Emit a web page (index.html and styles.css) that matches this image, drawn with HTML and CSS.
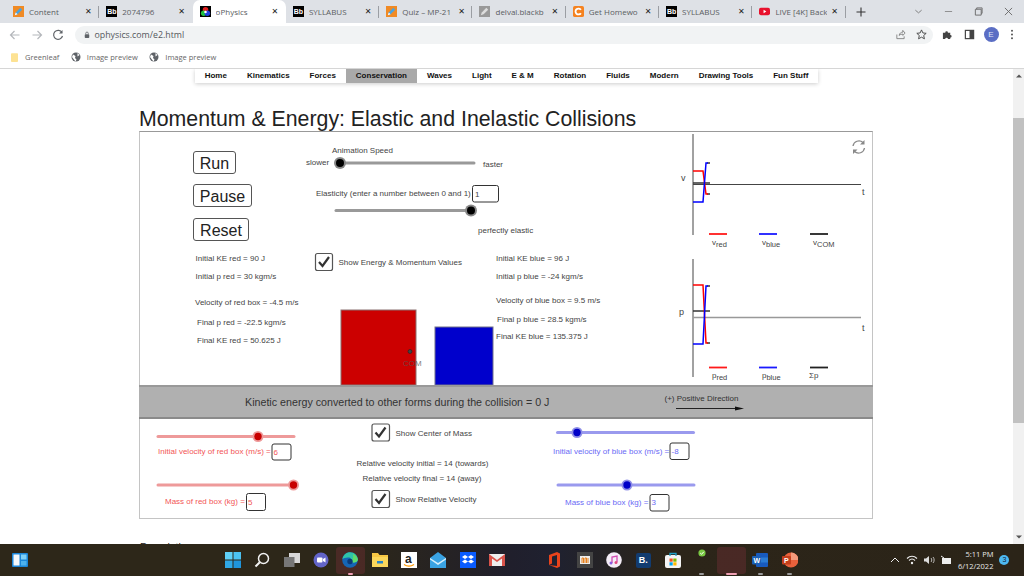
FILE: index.html
```html
<!DOCTYPE html>
<html lang="en">
<head>
<meta charset="utf-8">
<title>oPhysics</title>
<link rel="stylesheet" href="styles.css">
</head>
<body>
<div class="browser">
  <div class="tabstrip">
    <div class="tab sep"><svg class="fav" viewBox="0 0 12 12"><rect width="12" height="12" fill="#f08a24"/><path d="M2 10l1-3 5-5 2 2-5 5z" fill="#4aa3df"/><path d="M2 10l1-3 2 2z" fill="#fff"/></svg><span class="tab-title">Content</span><span class="close">✕</span></div>
    <div class="tab"><span class="bb">Bb</span><span class="tab-title">2074796</span><span class="close">✕</span></div>
    <div class="tab active"><svg class="fav" viewBox="0 0 12 12"><rect width="12" height="12" fill="#000"/><circle cx="6" cy="4" r="3" fill="#e02020"/><circle cx="4" cy="8" r="3" fill="#20c040"/><circle cx="8" cy="8" r="3" fill="#2040e0"/><circle cx="6" cy="6.5" r="1.4" fill="#fff"/></svg><span class="tab-title">oPhysics</span><span class="close">✕</span></div>
    <div class="tab sep"><span class="bb">Bb</span><span class="tab-title">SYLLABUS</span><span class="close">✕</span></div>
    <div class="tab sep"><svg class="fav" viewBox="0 0 12 12"><rect width="12" height="12" fill="#f08a24"/><path d="M2 10l1-3 5-5 2 2-5 5z" fill="#4aa3df"/><path d="M2 10l1-3 2 2z" fill="#fff"/></svg><span class="tab-title">Quiz – MP-21</span><span class="close">✕</span></div>
    <div class="tab sep"><svg class="fav" viewBox="0 0 12 12"><rect width="12" height="12" fill="#999"/><path d="M2 10l1-3 5-5 2 2-5 5z" fill="#ddd"/></svg><span class="tab-title">delval.blackb</span><span class="close">✕</span></div>
    <div class="tab sep"><svg class="fav" viewBox="0 0 12 12"><rect width="12" height="12" rx="2" fill="#f5821f"/><path d="M8.6 4.2A3.2 3.2 0 1 0 8.6 7.8" fill="none" stroke="#fff" stroke-width="2"/></svg><span class="tab-title">Get Homewo</span><span class="close">✕</span></div>
    <div class="tab sep"><span class="bb">Bb</span><span class="tab-title">SYLLABUS</span><span class="close">✕</span></div>
    <div class="tab sep"><svg class="fav" viewBox="0 0 12 12"><rect y="2" width="12" height="8" rx="2" fill="#e8112d"/><path d="M5 4l3 2-3 2z" fill="#fff"/></svg><span class="tab-title">LIVE [4K] Back</span><span class="close">✕</span></div>
    <svg class="newtab" viewBox="0 0 10 10"><path d="M5 .5v9M.5 5h9" stroke="#333" stroke-width="1.1"/></svg>
    <div class="winctl">
      <svg viewBox="0 0 10 10"><path d="M1.5 3.5L5 6.5l3.5-3" fill="none" stroke="#777"/></svg>
      <svg viewBox="0 0 10 10"><path d="M1 5h8" stroke="#888"/></svg>
      <svg viewBox="0 0 10 10"><path d="M1.5 2.5h6.500v6.500h-6.500zM3 2.500v-1.500h6v6h-1" fill="none" stroke="#666"/></svg>
      <svg viewBox="0 0 10 10"><path d="M1 1l8 8M9 1l-8 8" stroke="#666"/></svg>
    </div>
  </div>

  <div class="toolbar">
    <svg class="tool-ic" viewBox="0 0 12 12"><path d="M10.500 6h-9M5.500 2l-4 4 4 4" fill="none" stroke="#b4b7bb" stroke-width="1.200"/></svg>
    <svg class="tool-ic" viewBox="0 0 12 12"><path d="M1.500 6h9M6.500 2l4 4-4 4" fill="none" stroke="#b4b7bb" stroke-width="1.200"/></svg>
    <svg class="tool-ic" viewBox="0 0 12 12"><path d="M10 3.500A4.500 4.500 0 1 0 10.500 7" fill="none" stroke="#5f6368" stroke-width="1.200"/><path d="M10.500 1v3.500H7z" fill="#5f6368"/></svg>
    <div class="omnibox">
      <svg class="lock" viewBox="0 0 8 10"><rect x="1" y="4" width="6" height="5" rx="1" fill="#5f6368"/><path d="M2.300 4V2.800a1.700 1.700 0 0 1 3.400 0V4" fill="none" stroke="#5f6368"/></svg>
      <span class="url">ophysics.com/e2.html</span>
      <svg class="omni-ic" viewBox="0 0 12 12"><path d="M2 6v4.500h8V8M4.500 7c.5-2.500 2-3.500 4-3.500V1.500L11 4.500 8.500 7V5.500C7 5.500 5.500 6 4.500 7z" fill="none" stroke="#777" stroke-width=".9"/></svg>
      <svg class="omni-ic" viewBox="0 0 12 12"><path d="M6 1l1.500 3.300 3.600.4-2.700 2.400.8 3.600L6 8.900l-3.200 1.800.8-3.600L.9 4.700l3.600-.4z" fill="none" stroke="#444" stroke-width="1"/></svg>
    </div>
    <svg class="ext" viewBox="0 0 12 12"><path d="M1 4h2.500a1.500 1.500 0 0 1 3 0H9v2.500a1.500 1.500 0 0 1 0 3V11H6.500a1.500 1.500 0 0 0-3 0H1z" fill="#444"/></svg>
    <svg class="ext panel" viewBox="0 0 12 12"><rect x="1.500" y="1.500" width="9" height="9" fill="none" stroke="#444" stroke-width="1.300"/><rect x="6" y="1.500" width="4.500" height="9" fill="#444"/></svg>
    <span class="avatar">E</span>
    <svg class="dots" viewBox="0 0 4 12"><circle cx="2" cy="2" r="1.100"/><circle cx="2" cy="6" r="1.100"/><circle cx="2" cy="10" r="1.100"/></svg>
  </div>

  <div class="bookmarks">
    <span class="bm"><svg class="folder" viewBox="0 0 8 10"><rect width="8" height="10" rx="1" fill="#fde293"/></svg>Greenleaf</span>
    <span class="bm"><svg class="globe" viewBox="0 0 10 10"><circle cx="5" cy="5" r="4.500" fill="#5f6368"/><path d="M2 2.500l2.500 1.500-.5 2 1.500 1.500-1 2L2.500 7 1 5zM6.500 1l2 2-2 1.500z" fill="#fff"/></svg>Image preview</span>
    <span class="bm"><svg class="globe" viewBox="0 0 10 10"><circle cx="5" cy="5" r="4.500" fill="#5f6368"/><path d="M2 2.500l2.500 1.500-.5 2 1.500 1.500-1 2L2.500 7 1 5zM6.500 1l2 2-2 1.500z" fill="#fff"/></svg>Image preview</span>
  </div>

  <div class="viewport">
    <main class="page">
      <nav class="nav">
        <a>Home</a><a>Kinematics</a><a>Forces</a><a class="current">Conservation</a><a>Waves</a><a>Light</a><a>E &amp; M</a><a>Rotation</a><a>Fluids</a><a>Modern</a><a>Drawing Tools</a><a>Fun Stuff</a>
      </nav>
      <div class="container">
        <h1 class="title">Momentum &amp; Energy: Elastic and Inelastic Collisions</h1>
        <section class="sim">
          <svg class="stage" viewBox="140 132 732 253">
            <g class="btn">
              <rect x="193.500" y="151.500" width="42" height="22" rx="2.500"/><text x="214.500" y="169">Run</text>
              <rect x="193.500" y="184.500" width="58" height="22" rx="2.500"/><text x="222.500" y="202">Pause</text>
              <rect x="193.500" y="218.500" width="55" height="22" rx="2.500"/><text x="221" y="236">Reset</text>
            </g>

            <text class="lab" x="332" y="153">Animation Speed</text>
            <text class="lab" x="306" y="164.500">slower</text>
            <text class="lab" x="483" y="167">faster</text>
            <line class="track-gray" x1="340" y1="163" x2="474" y2="163"/>
            <circle class="halo-gray" cx="340" cy="163" r="6"/><circle cx="340" cy="163" r="4"/>

            <text class="lab" x="316" y="196">Elasticity (enter a number between 0 and 1)</text>
            <rect class="field" x="472.500" y="185.500" width="26" height="16.500" rx="2"/>
            <text class="lab" x="475" y="197">1</text>
            <line class="track-gray" x1="336" y1="210.500" x2="471" y2="210.500"/>
            <circle class="halo-gray" cx="471" cy="210.500" r="6"/><circle cx="471" cy="210.500" r="4"/>
            <text class="lab" x="478" y="233">perfectly elastic</text>

            <text class="lab" x="195.500" y="261">Initial KE red = 90 J</text>
            <text class="lab" x="195.500" y="279">Initial p red = 30 kgm/s</text>
            <text class="lab" x="195" y="305">Velocity of red box = -4.5 m/s</text>
            <text class="lab" x="197" y="325">Final p red = -22.5 kgm/s</text>
            <text class="lab" x="197" y="343">Final KE red = 50.625 J</text>

            <rect class="field check" x="315.500" y="253.500" width="17" height="17" rx="2"/>
            <path class="tick" d="M319 262l3.500 4 6.500-9"/>
            <text class="lab" x="338.500" y="265">Show Energy &amp; Momentum Values</text>

            <text class="lab" x="496" y="261">Initial KE blue = 96 J</text>
            <text class="lab" x="496" y="279">Initial p blue = -24 kgm/s</text>
            <text class="lab" x="496" y="302.500">Velocity of blue box = 9.5 m/s</text>
            <text class="lab" x="497" y="322">Final p blue = 28.5 kgm/s</text>
            <text class="lab" x="496" y="339">Final KE blue = 135.375 J</text>

            <rect class="box-red" x="341" y="310" width="75" height="75"/>
            <rect class="box-blue" x="435" y="327" width="58" height="58"/>
            <text class="lab com-label" x="403" y="366">COM</text>
            <circle class="com" cx="410" cy="351.500" r="2"/>

            <!-- velocity graph -->
            <line class="axis" x1="693" y1="134" x2="693" y2="235"/>
            <line class="axis" x1="693" y1="184.500" x2="861" y2="184.500"/>
            <text class="lab big" x="681" y="181">v</text>
            <text class="lab big" x="862" y="195">t</text>
            <path class="plot-k" d="M693 183H710"/>
            <path class="plot-k" d="M707 194h3M707 163h3"/>
            <path class="plot-r" d="M693 171H703L706 194H708"/>
            <path class="plot-b" d="M693 202H703L706 163H708"/>
            <path class="leg-r" d="M709 234h18"/><path class="leg-b" d="M759 234h18"/><path class="leg-k" d="M810 234h18"/>
            <text class="lab" x="712" y="245">v<tspan class="sub" dy="2">red</tspan></text>
            <text class="lab" x="762" y="245">v<tspan class="sub" dy="2">blue</tspan></text>
            <text class="lab" x="813" y="245">v<tspan class="sub" dy="2">COM</tspan></text>

            <!-- refresh icon -->
            <g class="refresh">
              <path d="M853 146a6 6 0 0 1 10-3.500M864.500 148a6 6 0 0 1-10 3.500"/>
              <path class="arrowhead" d="M864.500 140v4.500H860zM853 154v-4.500h4.500z"/>
            </g>

            <!-- momentum graph -->
            <line class="axis" x1="693" y1="259" x2="693" y2="377"/>
            <line class="axis-light" x1="693" y1="317.500" x2="861" y2="317.500"/>
            <text class="lab big" x="679" y="315">p</text>
            <text class="lab big" x="862" y="331">t</text>
            <path class="plot-k" d="M693 311H710"/>
            <path class="plot-k" d="M707 343h3M707 286h3"/>
            <path class="plot-r" d="M693 285H703L706 343H708"/>
            <path class="plot-b" d="M693 344H703L706 286H708"/>
            <path class="leg-r" d="M709 367.500h18"/><path class="leg-b" d="M759 367.500h18"/><path class="leg-k" d="M810 367.500h18"/>
            <text class="lab" x="712" y="378">p<tspan class="sub" dy="2">red</tspan></text>
            <text class="lab" x="762" y="378">p<tspan class="sub" dy="2">blue</tspan></text>
            <text class="lab" x="809" y="378">Σp</text>
          </svg>

          <div class="band">
            <span class="band-text">Kinetic energy converted to other forms during the collision = 0 J</span>
            <div class="direction">
              <span>(+) Positive Direction</span>
              <svg class="dir-arrow" viewBox="0 0 68 5"><path d="M0 2.500h62" stroke="#222"/><path d="M59 .5l9 2-9 2z" fill="#111"/></svg>
            </div>
          </div>

          <svg class="controls" viewBox="140 419 732 99">
            <line class="track-red" x1="158" y1="436.500" x2="294" y2="436.500"/>
            <circle class="halo-red" cx="258" cy="436.500" r="5.500"/><circle class="knob-red" cx="258" cy="436.500" r="3.700"/>
            <text class="lab red" x="158" y="454">Initial velocity of red box (m/s) =</text>
            <rect class="field" x="272" y="444" width="19" height="16" rx="2"/>
            <text class="lab red" x="273.500" y="455">6</text>
            <line class="track-red" x1="158" y1="485" x2="294" y2="485"/>
            <circle class="halo-red" cx="293.500" cy="485" r="5.500"/><circle class="knob-red" cx="293.500" cy="485" r="3.700"/>
            <text class="lab red" x="165" y="504">Mass of red box (kg) =</text>
            <rect class="field" x="246.500" y="493.500" width="19" height="17" rx="2"/>
            <text class="lab red" x="248" y="505">5</text>

            <rect class="field check" x="372" y="424" width="17.500" height="17" rx="2"/>
            <path class="tick" d="M375.500 432.500l3.500 4 6.500-9"/>
            <text class="lab" x="395.500" y="436">Show Center of Mass</text>
            <text class="lab" x="356.500" y="466">Relative velocity initial = 14 (towards)</text>
            <text class="lab" x="362.500" y="481">Relative velocity final = 14 (away)</text>
            <rect class="field check" x="372" y="490.500" width="17.500" height="17" rx="2"/>
            <path class="tick" d="M375.500 499l3.500 4 6.500-9"/>
            <text class="lab" x="395.500" y="502">Show Relative Velocity</text>

            <line class="track-blue" x1="557.500" y1="432.500" x2="693.500" y2="432.500"/>
            <circle class="halo-blue" cx="577" cy="432.500" r="5.500"/><circle class="knob-blue" cx="577" cy="432.500" r="3.700"/>
            <text class="lab blue" x="553" y="454">Initial velocity of blue box (m/s) =</text>
            <rect class="field" x="670" y="443" width="19" height="16.500" rx="2"/>
            <text class="lab blue" x="671.500" y="454">-8</text>
            <line class="track-blue" x1="558" y1="485" x2="694" y2="485"/>
            <circle class="halo-blue" cx="627" cy="485" r="5.500"/><circle class="knob-blue" cx="627" cy="485" r="3.700"/>
            <text class="lab blue" x="565" y="505">Mass of blue box (kg) =</text>
            <rect class="field" x="650" y="494.500" width="19" height="16.500" rx="2"/>
            <text class="lab blue" x="651.500" y="505">3</text>
          </svg>
        </section>
        <h2 class="desc">Description</h2>
      </div>
    </main>
    <div class="scrollbar">
      <svg class="sb-arrow" viewBox="0 0 6 4"><path d="M3 .5L6 3.500H0z" fill="#555"/></svg>
      <div class="sb-gap"></div>
      <div class="sb-thumb"></div>
      <div class="sb-fill"></div>
      <svg class="sb-arrow" viewBox="0 0 6 4"><path d="M3 3.500L6 .5H0z" fill="#555"/></svg>
    </div>
  </div>

  <footer class="taskbar">
    <svg class="widgets" viewBox="0 0 16 14"><rect width="16" height="14" rx="1" fill="#1b86d8"/><rect x="1.500" y="1.500" width="6" height="11" fill="#f4f8fb"/><rect x="9" y="1.500" width="5.500" height="5" fill="#7fd0f7"/><rect x="9" y="8" width="5.500" height="4.500" fill="#4db1ec"/></svg>
    <div class="apps">
      <div class="slot"><svg class="app" viewBox="0 0 16 16"><rect width="7.500" height="7.500" fill="#5fd0f7"/><rect x="8.500" width="7.500" height="7.500" fill="#4cc2f1"/><rect y="8.500" width="7.500" height="7.500" fill="#2fa8e6"/><rect x="8.500" y="8.500" width="7.500" height="7.500" fill="#1f95dc"/></svg></div>
      <div class="slot"><svg class="app" viewBox="0 0 16 16"><circle cx="9.500" cy="6.500" r="5" fill="none" stroke="#f2f2f2" stroke-width="1.500"/><path d="M5.800 10.200L1.500 14.500" stroke="#f2f2f2" stroke-width="2"/></svg></div>
      <div class="slot"><svg class="app" viewBox="0 0 16 16"><rect x="5" y="1" width="11" height="10" fill="#d8d8d8"/><rect y="5" width="10.500" height="10" fill="#777"/></svg></div>
      <div class="slot"><svg class="app" viewBox="0 0 16 16"><circle cx="8" cy="8" r="7.500" fill="#6264c8"/><rect x="4" y="5.500" width="5.500" height="5" rx="1" fill="#fff"/><path d="M10 7l2.500-1.500v5L10 9z" fill="#fff"/></svg></div>
      <div class="slot on"><svg class="app" viewBox="0 0 16 16"><circle cx="8" cy="8" r="7.800" fill="#1566b5"/><path d="M.4 7C1.500 2.500 4.500.2 8 .2c4.500 0 7.800 3.300 7.800 7.300 0 2-2 3-3.800 3-1.500 0-2.500-.5-2.800-1 1-2.500-1-4.500-3.500-4C3.500 6 1.500 6 .4 7z" fill="#2fc4a8"/><path d="M11 2c2.500 1 4.500 3 4.800 5.500 0 2-2 3-3.800 3-1 0-2-.3-2.500-.8C11 7 11.500 4.500 11 2z" fill="#5fdc6e"/><circle cx="8" cy="9.500" r="2.700" fill="#0b3a78"/></svg><i class="mark pink-short"></i></div>
      <div class="slot"><svg class="app" viewBox="0 0 16 16"><path d="M0 1h6l1.500 2H16v12H0z" fill="#f7c744"/><rect y="5" width="16" height="10" fill="#fbd75b"/><rect x="5" y="9" width="6" height="2.500" fill="#2a86c8"/></svg></div>
      <div class="slot"><svg class="app" viewBox="0 0 16 16"><rect width="16" height="16" fill="#fff"/><text class="a-letter" x="4" y="10.500">a</text><path d="M3 12.500c3 2 7 2 10 0" fill="none" stroke="#f90" stroke-width="1.200"/></svg></div>
      <div class="slot"><svg class="app" viewBox="0 0 16 16"><path d="M0 6l8-6 8 6v10H0z" fill="#3aa3e3"/><path d="M0 6l8 5 8-5v1.500L8 13 0 7.500z" fill="#d6effb"/></svg></div>
      <div class="slot"><svg class="app" viewBox="0 0 16 16"><rect width="16" height="16" fill="#0a5cff"/><path d="M5 3l3 2-3 2-3-2zM11 3l3 2-3 2-3-2zM5 7.500l3 2-3 2-3-2zM11 7.500l3 2-3 2-3-2z" fill="#fff"/></svg></div>
      <div class="slot"><svg class="app" viewBox="0 0 16 16"><rect y="2" width="16" height="12" fill="#eee"/><path d="M0 2l8 6 8-6v12h-3V6.500L8 10 3 6.500V14H0z" fill="#d9534a"/></svg></div>
      <div class="slot"></div>
      <div class="slot"><svg class="app" viewBox="0 0 16 16"><path d="M2 3l8-3 3 1.500v13L10 16l-8-3 8 1V3L5 4.500v7L2 13z" fill="#e8431c"/></svg></div>
      <div class="slot"><svg class="app" viewBox="0 0 16 16"><rect width="16" height="16" fill="#444"/><rect x="3" y="4" width="10" height="8" fill="#eee"/><path d="M5 11V6h1.500v5M8 11V6h1.500v5M11 11V6" stroke="#e8801c" fill="none"/></svg></div>
      <div class="slot"><svg class="app" viewBox="0 0 16 16"><circle cx="8" cy="8" r="7.800" fill="#f4edf7"/><path d="M6 11V5l5-1v6" fill="none" stroke="#d04bb0" stroke-width="1.300"/><circle cx="5" cy="11" r="1.500" fill="#8a5be0"/><circle cx="10" cy="10.500" r="1.500" fill="#e04a80"/></svg></div>
      <div class="slot"><span class="app-b">B.</span></div>
      <div class="slot"><svg class="app" viewBox="0 0 16 16"><rect y="3" width="16" height="13" rx="2" fill="#f4f4f4"/><path d="M5 4V1.500h6V4" fill="none" stroke="#1fa0c8" stroke-width="1.300"/><rect x="4.500" y="6.500" width="3.200" height="3.200" fill="#f25022"/><rect x="8.300" y="6.500" width="3.200" height="3.200" fill="#7fba00"/><rect x="4.500" y="10.300" width="3.200" height="3.200" fill="#00a4ef"/><rect x="8.300" y="10.300" width="3.200" height="3.200" fill="#ffb900"/></svg></div>
      <div class="slot"><svg class="dot-app" viewBox="0 0 8 8"><circle cx="4" cy="4" r="3.600" fill="#7ac943"/><path d="M2.200 4l1.300 1.300 2.300-2.500" fill="none" stroke="#fff"/></svg><i class="mark gray"></i></div>
      <div class="slot on"><i class="mark pink"></i></div>
      <div class="slot"><svg class="app" viewBox="0 0 16 16"><rect x="4" y="1" width="12" height="14" rx="1" fill="#185abd"/><rect x="4" y="5.500" width="12" height="5" fill="#2b7cd3"/><rect y="4" width="9" height="8.500" rx="1" fill="#1a5fb4"/><text class="w-letter" x="1.500" y="10.800">W</text></svg><i class="mark gray"></i></div>
      <div class="slot"><svg class="app" viewBox="0 0 16 16"><circle cx="9" cy="8" r="7.500" fill="#e8613c"/><path d="M9 .5a7.500 7.500 0 0 1 7.500 7.500H9z" fill="#f59b7c"/><rect y="4" width="9" height="8.500" rx="1" fill="#c43e1c"/><text class="w-letter" x="2" y="10.800">P</text></svg><i class="mark gray"></i></div>
    </div>
    <div class="tray">
      <svg class="tray-ic" viewBox="0 0 12 10"><path d="M2 7l4-4 4 4" fill="none" stroke="#eee" stroke-width="1"/></svg>
      <svg class="tray-ic" viewBox="0 0 12 10"><path d="M1 3.500c3-3 7-3 10 0M3 5.500c2-2 4-2 6 0" fill="none" stroke="#eee" stroke-width="1.100"/><circle cx="6" cy="8" r="1.200" fill="#eee"/></svg>
      <svg class="tray-ic" viewBox="0 0 12 10"><path d="M1 3.500h2l3-2.500v8L3 6.500H1z" fill="#ddd"/><path d="M8 3c1 1 1 3 0 4M10 2c1.500 1.500 1.500 4.500 0 6" fill="none" stroke="#ddd" stroke-width=".8"/></svg>
      <svg class="tray-ic" viewBox="0 0 12 10"><rect x="2" y="3" width="9" height="6" fill="#eee"/><path d="M1 1l3 2" stroke="#eee"/></svg>
    </div>
    <div class="clock"><span>5:11 PM</span><span>6/12/2022</span></div>
    <span class="badge">3</span>
  </footer>
</div>
</body>
</html>
```
FILE: styles.css
```css
* { box-sizing: border-box; }
html, body { margin: 0; height: 100%; overflow: hidden; }
body { font-family: "Liberation Sans", Arial, sans-serif; background: #fff; }
.browser { display: flex; flex-direction: column; width: 1024px; height: 576px; }

/* tab strip */
.tabstrip { display: flex; align-items: center; height: 23px; padding-left: 6px; background: #dee1e6; flex: none; }
.tab { position: relative; display: flex; align-items: center; flex: none; width: 93.3px; height: 23px; padding: 0 6px 0 7px; overflow: hidden; }
.tab.sep::after { content: ""; position: absolute; right: 0; top: 6px; width: 1px; height: 12px; background: #9b9ea3; }
.tab.active { background: #fff; border-radius: 7px 7px 0 0; }
.fav { width: 11px; height: 11px; flex: none; }
.bb { width: 11px; height: 11px; flex: none; background: #000; color: #fff; font-size: 7px; font-weight: bold; line-height: 11px; text-align: center; }
.tab-title { flex: 1; min-width: 0; margin-left: 5px; overflow: hidden; white-space: nowrap; font-family: "Open Sans", sans-serif; font-size: 8px; color: #5a5d62; }
.close { flex: none; width: 10px; margin-left: 3px; font-family: "DejaVu Sans", sans-serif; font-size: 8px; color: #222; text-align: center; }
.newtab { width: 10px; height: 10px; margin-left: 10px; flex: none; }
.winctl { display: flex; align-items: center; gap: 21px; margin-left: 48px; }
.winctl svg { width: 9px; height: 9px; }

/* toolbar */
.toolbar { display: flex; align-items: center; height: 23px; padding-left: 9px; flex: none; background: #fff; }
.tool-ic { width: 12px; height: 12px; margin-right: 9.500px; flex: none; }
.omnibox { display: flex; align-items: center; width: 858px; height: 18px; margin-left: 1px; padding: 0 6px 0 9px; border-radius: 9px; background: #f1f3f4; }
.lock { width: 6px; height: 8px; flex: none; }
.url { flex: 1; margin-left: 5px; font-family: "Open Sans", sans-serif; font-size: 8.800px; color: #55585c; }
.omni-ic { width: 11px; height: 11px; margin-left: 10px; flex: none; }
.ext { width: 11px; height: 11px; margin-left: 9px; flex: none; }
.panel { margin-left: 11px; }
.avatar { width: 15px; height: 15px; margin-left: 9px; flex: none; border-radius: 50%; background: #5b6ec4; color: #dfe3f5; font-size: 8px; line-height: 15px; text-align: center; }
.dots { width: 4px; height: 11px; margin-left: 11px; fill: #555; flex: none; }

/* bookmarks */
.bookmarks { display: flex; align-items: center; gap: 11.500px; height: 23px; padding-left: 11px; flex: none; border-bottom: 1px solid #d6d6d6; background: #fff; }
.bm { display: flex; align-items: center; font-family: "Open Sans", sans-serif; font-size: 7.500px; color: #666; white-space: nowrap; }
.folder { width: 7px; height: 9px; margin-right: 7px; }
.globe { width: 10px; height: 10px; margin-right: 6px; }

/* page */
.viewport { display: flex; flex: 1; min-height: 0; }
.page { flex: 1; min-width: 0; overflow: hidden; background: #fff; }
.scrollbar { display: flex; flex-direction: column; align-items: center; width: 11px; flex: none; background: #f1f1f1; }
.sb-arrow { width: 6px; height: 4px; margin: 5px 0; flex: none; }
.sb-gap { height: 35px; flex: none; }
.sb-thumb { width: 100%; height: 305px; flex: none; background: #c1c1c1; }
.sb-fill { flex: 1; }

.nav { display: flex; width: max-content; height: 14px; margin: 0 auto; box-shadow: 0 1px 4px rgba(0,0,0,.2); background: #fff; }
.nav a { padding: 0 10px; font-size: 8px; font-weight: bold; line-height: 14px; color: #111; white-space: nowrap; }
.nav a.current { background: #a9a9a9; }

.container { width: 735px; margin: 0 auto; }
.title { margin: 24px 0 0; font-size: 21.300px; font-weight: normal; line-height: 24px; color: #222; white-space: nowrap; }
.sim { display: flex; flex-direction: column; width: 734px; height: 388px; border: 1px solid #c4c4c4; border-top-color: #999; }
.stage { display: block; width: 732px; height: 253px; flex: none; }
.controls { display: block; width: 732px; height: 99px; flex: none; }

.band { display: flex; align-items: center; height: 34px; flex: none; padding-left: 106px; background: #b0b0b0; border-top: 2px solid #999; border-bottom: 2px solid #8a8a8a; margin: 0 -1px; }
.band-text { font-size: 10.700px; color: #333; white-space: nowrap; }
.direction { display: flex; flex-direction: column; margin-left: 115px; }
.direction span { font-size: 8px; color: #333; white-space: nowrap; }
.dir-arrow { width: 68px; height: 5px; margin: 3px 0 0 12px; }
.desc { margin: 22px 0 0 1px; font-size: 10.500px; font-weight: normal; line-height: 12px; color: #222; }

/* svg simulation drawing */
.lab { font-size: 8px; fill: #444; }
.lab.big { font-size: 9px; }
.lab.red { fill: #f25656; }
.lab.blue { fill: #6a6af5; }
.lab.com-label { fill: #555; opacity: .75; }
.sub { font-size: 7.500px; }
.btn rect { fill: #fff; stroke: #555; }
.btn text { font-size: 16px; fill: #222; text-anchor: middle; }
.field { fill: #fff; stroke: #333; }
.field.check { stroke: #555; stroke-width: 1.200; }
.tick { fill: none; stroke: #333; stroke-width: 2.200; }
.track-gray { stroke: #999; stroke-width: 3; stroke-linecap: round; }
.halo-gray { fill: #888; }
.track-red { stroke: #ee9a9a; stroke-width: 3; stroke-linecap: round; }
.halo-red { fill: #ee9a9a; }
.knob-red { fill: #c80000; }
.track-blue { stroke: #9a9aee; stroke-width: 3; stroke-linecap: round; }
.halo-blue { fill: #8f8fe6; }
.knob-blue { fill: #0000c8; }
.box-red { fill: #cc0000; stroke: #8a7070; stroke-width: 1; }
.box-blue { fill: #0000cc; stroke: #70708a; stroke-width: 1; }
.com { fill: #444; stroke: #222; stroke-width: .6; }
.axis { stroke: #444; stroke-width: 1; }
.axis-light { stroke: #999; stroke-width: 1.500; }
.plot-r { fill: none; stroke: #ff0000; stroke-width: 1.500; }
.plot-b { fill: none; stroke: #0000ff; stroke-width: 1.500; }
.plot-k { fill: none; stroke: #333; stroke-width: 1.500; }
.leg-r { stroke: #ff1a1a; stroke-width: 1.800; }
.leg-b { stroke: #1a1aff; stroke-width: 1.800; }
.leg-k { stroke: #222; stroke-width: 1.800; }
.refresh { fill: none; stroke: #888; stroke-width: 1.300; }
.refresh .arrowhead { fill: #888; stroke: none; }

/* taskbar */
.taskbar { display: flex; align-items: center; height: 32px; flex: none; padding-left: 12px; background: linear-gradient(90deg, #2d2719 0%, #2d2719 35%, #201f2c 50%, #1f2130 54%, #2c2519 65%, #2b2418 100%); }
.widgets { width: 16px; height: 14px; flex: none; }
.apps { display: flex; margin-left: 190.500px; flex: none; }
.slot { position: relative; display: flex; align-items: center; justify-content: center; width: 29.300px; height: 27px; flex: none; border-radius: 3px; }
.slot.on { background: rgba(130,50,60,.35); }
.app { width: 16px; height: 16px; }
.dot-app { width: 8px; height: 8px; position: absolute; left: 10.500px; top: 2px; }
.app-b { width: 15px; height: 15px; border-radius: 2px; background: #123c70; color: #fff; font-size: 9px; font-weight: bold; line-height: 15px; text-align: center; }
.w-letter { font-size: 7px; font-weight: bold; fill: #fff; }
.a-letter { font-size: 12px; font-weight: bold; fill: #222; }
.mark { position: absolute; bottom: -1px; left: 50%; width: 5px; height: 2px; margin-left: -2.500px; border-radius: 1px; background: #999; }
.mark.pink { width: 11px; margin-left: -5.500px; background: #f0a0b4; }
.mark.pink-short { background: #f0a0b4; }
.tray { display: flex; align-items: center; gap: 5px; margin-left: 85px; flex: none; }
.tray-ic { width: 12px; height: 10px; }
.clock { display: flex; flex-direction: column; align-items: flex-end; width: 39px; margin-left: 2px; font-family: "Open Sans", sans-serif; font-size: 7.500px; line-height: 12px; color: #e8e8e8; flex: none; }
.badge { width: 10px; height: 10px; margin-left: 6px; flex: none; border-radius: 50%; background: #4db8f0; color: #123; font-size: 7px; line-height: 10px; text-align: center; }
```
